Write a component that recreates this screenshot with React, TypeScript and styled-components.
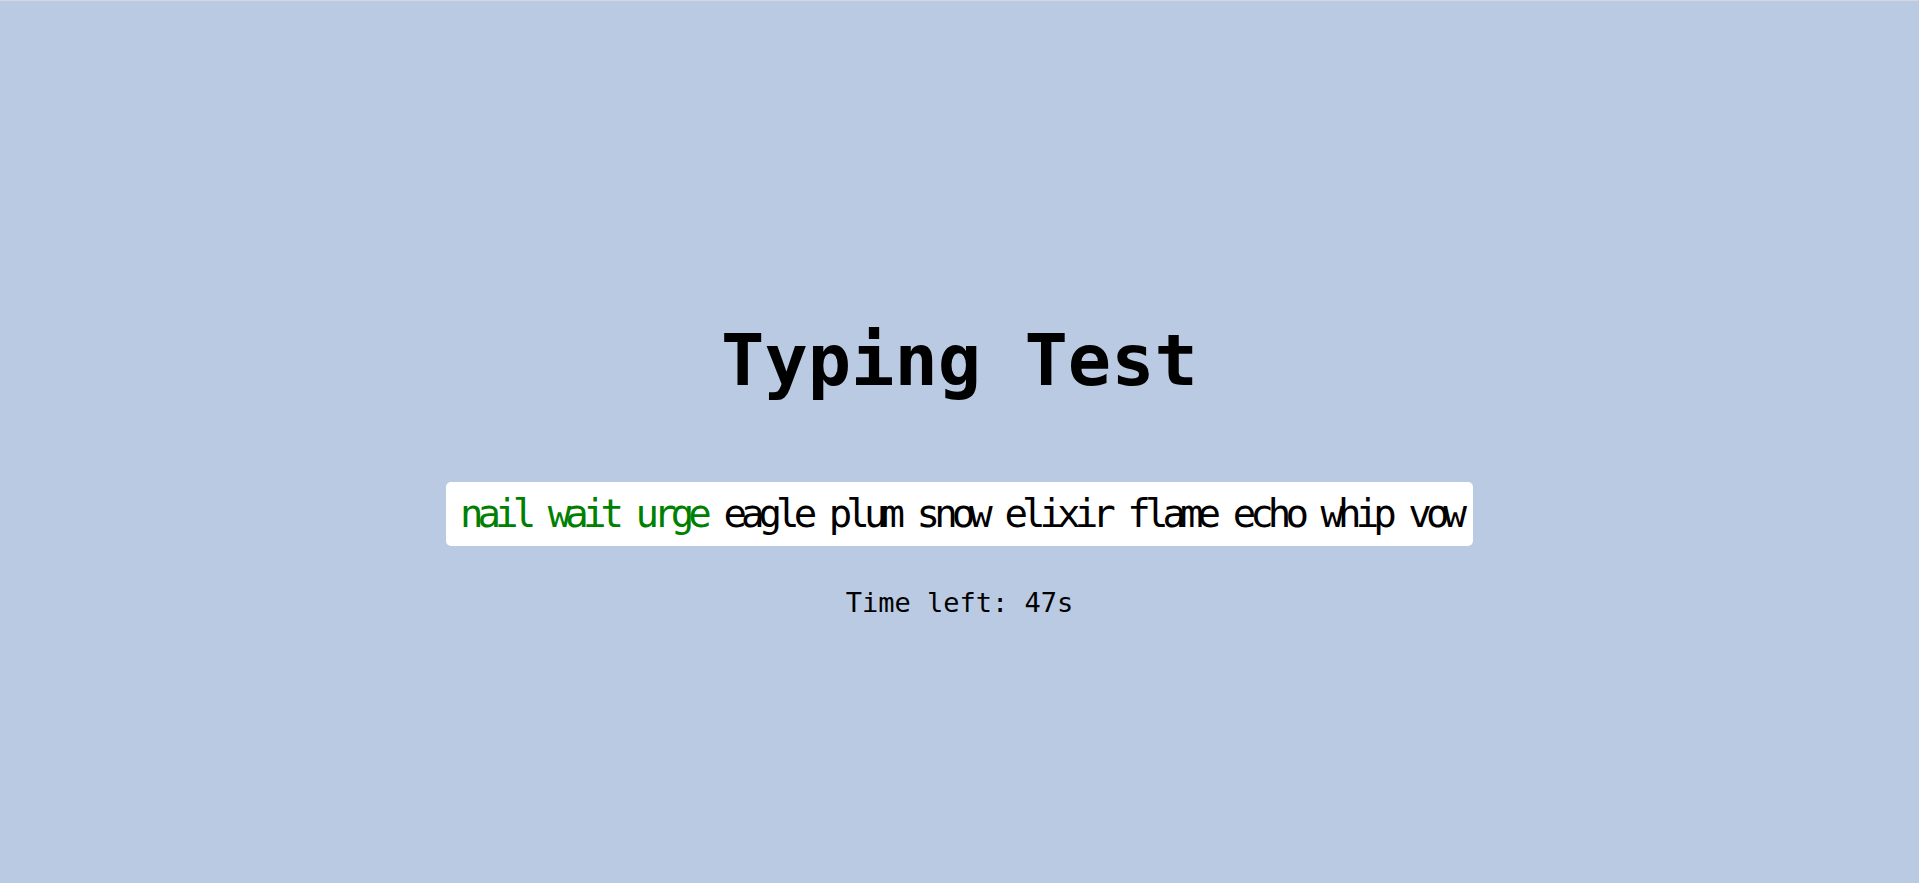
import React from "react";
import styled, { createGlobalStyle } from "styled-components";

const Global = createGlobalStyle`
  html, body { margin: 0; padding: 0; }
  body { background: #b9cae2; font-family: "DejaVu Sans Mono", "Liberation Mono", monospace; }
`;

const Page = styled.main`
  box-sizing: border-box;
  min-height: 883px;
  border-top: 1px solid #d4d8de;
  padding-top: 53px;
  display: flex;
  flex-direction: column;
  align-items: center;
  justify-content: center;
  color: #000;
`;

const Title = styled.h1`
  margin: 0 0 80px;
  font-family: "DejaVu Sans Mono", monospace;
  font-weight: bold;
  font-size: 72px;
  line-height: 84px;
`;

const WordBox = styled.div`
  background: #fff;
  border-radius: 5px;
  padding: 10px 12px 10px 14px;
  font-family: "DejaVu Sans Mono", monospace;
  font-size: 39px;
  letter-spacing: -5.92px;
  line-height: 44px;
  white-space: nowrap;
`;

const Word = styled.span<{ $done: boolean }>`
  color: ${(p) => (p.$done ? "#008000" : "#000")};
`;

const Timer = styled.p`
  margin: 41px 0 0;
  font-family: "DejaVu Sans Mono", monospace;
  font-size: 27px;
  line-height: 32px;
`;

const words = ["nail", "wait", "urge", "eagle", "plum", "snow", "elixir", "flame", "echo", "whip", "vow"];
const typed = 3;

export default function App() {
  return (
    <>
      <Global />
      <Page>
        <Title>Typing Test</Title>
        <WordBox>
          {words.map((w, i) => (
            <React.Fragment key={w}>
              <Word $done={i < typed}>{w}</Word>
              {i < words.length - 1 ? " " : ""}
            </React.Fragment>
          ))}
        </WordBox>
        <Timer>Time left: 47s</Timer>
      </Page>
    </>
  );
}
